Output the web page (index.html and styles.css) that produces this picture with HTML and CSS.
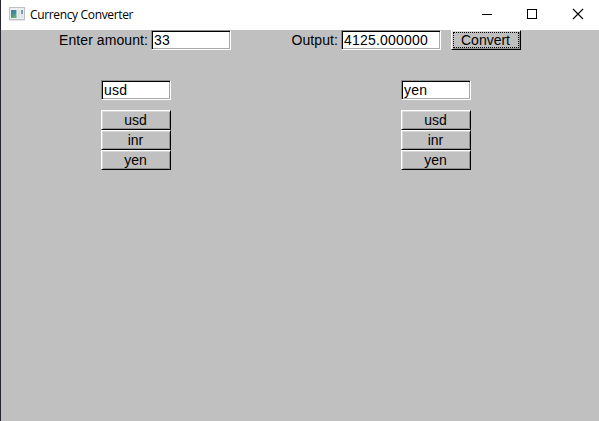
FILE: index.html
```html
<!DOCTYPE html>
<html lang="en">
<head>
<meta charset="utf-8">
<title>Currency Converter</title>
<link rel="stylesheet" href="styles.css">
</head>
<body>
<div class="window">
  <header class="titlebar">
    <svg class="app-icon" width="16" height="14" viewBox="0 0 16 14">
      <defs>
        <linearGradient id="pane" x1="0" y1="0" x2="0.4" y2="1">
          <stop offset="0" stop-color="#4a78b0"/>
          <stop offset="0.5" stop-color="#418c94"/>
          <stop offset="1" stop-color="#5fae78"/>
        </linearGradient>
      </defs>
      <rect x="0.5" y="0.5" width="15" height="12" fill="#eceef0" stroke="#bcc1c8"/>
      <path d="M0 13.5h16" stroke="#e6e6e6"/>
      <rect x="2" y="3" width="5" height="8" fill="url(#pane)"/>
      <rect x="7" y="3" width="1" height="8" fill="#a5c9bd"/>
      <rect x="9" y="3" width="2" height="8" fill="#dfe2e4"/>
      <rect x="12" y="3" width="2" height="4" fill="#6fa3ac"/>
      <rect x="12" y="7" width="2" height="4" fill="#dfe2e4"/>
    </svg>
    <span class="title">Currency Converter</span>
    <div class="controls">
      <svg width="46" height="30" viewBox="0 0 46 30"><path d="M18 14.5h10" stroke="#000"/></svg>
      <svg width="46" height="30" viewBox="0 0 46 30"><rect x="17.5" y="9.5" width="9" height="9" fill="none" stroke="#000"/></svg>
      <svg width="46" height="30" viewBox="0 0 46 30"><path d="M17 9l10 10M27 9l-10 10" stroke="#000" stroke-width="1.1"/></svg>
    </div>
  </header>
  <main class="content">
    <div class="amount-row">
      <span class="label label-amount">Enter amount:</span>
      <div class="field field-amount">33</div>
      <span class="label label-output">Output:</span>
      <div class="field field-output">4125.000000</div>
      <div class="button convert">Convert</div>
    </div>
    <div class="currencies">
      <section class="picker">
        <div class="field">usd</div>
        <div class="options">
          <div class="button">usd</div>
          <div class="button">inr</div>
          <div class="button">yen</div>
        </div>
      </section>
      <section class="picker">
        <div class="field">yen</div>
        <div class="options">
          <div class="button">usd</div>
          <div class="button">inr</div>
          <div class="button">yen</div>
        </div>
      </section>
    </div>
  </main>
</div>
</body>
</html>
```
FILE: styles.css
```css
* { box-sizing: border-box; }

body {
  margin: 0;
  background: #c0c0c0;
}

.window {
  height: 421px;
  border-left: 1px solid #25272e;
  display: flex;
  flex-direction: column;
  overflow: hidden;
}

.titlebar {
  height: 30px;
  flex: none;
  display: flex;
  align-items: center;
  padding-left: 8px;
  background: #fff;
}

.app-icon {
  flex: none;
  margin-bottom: 2px;
}

.title {
  margin-left: 5px;
  font: 12px/30px "Open Sans", sans-serif;
  letter-spacing: -0.35px;
  white-space: nowrap;
  color: #000;
}

.controls {
  display: flex;
  margin-left: auto;
  margin-right: -3px;
}

.content {
  flex: 1;
  background: #c0c0c0;
  font: 14px/18px "Liberation Sans", Arial, sans-serif;
  color: #000;
}

.amount-row {
  display: flex;
  height: 20px;
}

.label {
  text-align: right;
  padding: 1px 3px 0 0;
  letter-spacing: 0.08px;
  white-space: nowrap;
}

.label-amount { width: 150px; }
.label-output { width: 110px; }

.field {
  height: 20px;
  padding: 1px 2px;
  line-height: 16px;
  letter-spacing: 0.2px;
  background: #fff;
  border: 1px solid;
  border-color: #909090 #fff #fff #909090;
  box-shadow: inset 1px 1px #000, inset -1px -1px #a8a8a8;
}

.field-amount { width: 80px; }
.field-output { width: 100px; }

.button {
  height: 20px;
  padding: 1px 2px 1px 1px;
  line-height: 16px;
  text-align: center;
  background: #c0c0c0;
  border: 1px solid;
  border-color: #fff #000 #000 #fff;
  box-shadow: inset 1px 1px #d8d8d8, inset -1px -1px #909090;
}

.convert {
  width: 70px;
  margin-left: 10px;
  outline: 1px dotted #000;
  outline-offset: -3px;
}

.currencies {
  display: flex;
  gap: 230px;
  margin: 30px 0 0 100px;
}

.picker { width: 70px; }

.options { margin-top: 10px; }
```
